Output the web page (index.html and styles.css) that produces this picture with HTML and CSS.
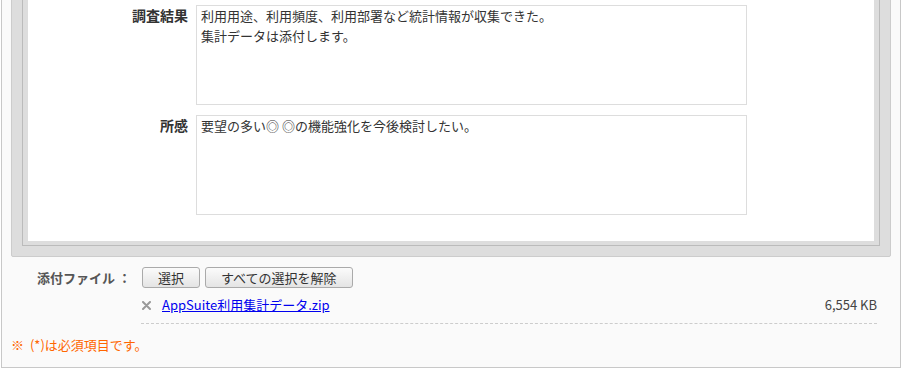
FILE: index.html
```html
<!DOCTYPE html>
<html lang="ja">
<head>
<meta charset="utf-8">
<link rel="stylesheet" href="styles.css">
</head>
<body>
<div id="page">
	<div class="frame">
		<div class="frame-inner">
			<div class="form-body">
				<div class="form-row">
					<label class="form-label">調査結果</label>
					<textarea class="form-text" readonly>利用用途、利用頻度、利用部署など統計情報が収集できた。
集計データは添付します。</textarea>
				</div>
				<div class="form-row">
					<label class="form-label">所感</label>
					<textarea class="form-text" readonly>要望の多い◎ ◎の機能強化を今後検討したい。</textarea>
				</div>
			</div>
		</div>
	</div>

	<div class="attach">
		<div class="attach-row">
			<span class="attach-label">添付ファイル ：</span>
			<div class="attach-body">
				<div class="attach-buttons">
					<button type="button" class="btn">選択</button>
					<button type="button" class="btn">すべての選択を解除</button>
				</div>
				<div class="file-item">
					<span class="file-del"><svg width="9" height="9" viewBox="0 0 9 9"><path d="M1 1L8 8M8 1L1 8" stroke="#999" stroke-width="2" stroke-linecap="round"/></svg></span>
					<a href="#" class="file-link">AppSuite利用集計データ.zip</a>
					<span class="file-size">6,554 KB</span>
				</div>
			</div>
		</div>
		<p class="note">※ (*)は必須項目です。</p>
	</div>
</div>
</body>
</html>
```

FILE: styles.css
```css
body {
	margin: 0;
	background-color: #ffffff;
	font-family: "Noto Sans CJK JP", "Noto Sans", sans-serif;
	font-size: 13px;
	color: #333333;
}
#page {
	margin: -40px 1px 0 1px;
	border: 1px solid #c8c8c8;
	background-color: #fafafa;
	padding: 9px 9px 0 9px;
	height: 408px;
	box-sizing: border-box;
}
.frame {
	border: 1px solid #cccccc;
	background-color: #dddddd;
	padding: 10px;
	border-radius: 2px;
}
.frame-inner {
	border: 1px solid #bbbbbb;
	padding: 5px 5px 4px 5px;
}
.form-body {
	background-color: #ffffff;
	padding: 18px 0 26px 0;
}
.form-row {
	display: flex;
	gap: 8px;
	margin-bottom: 10px;
}
.form-row:last-child {
	margin-bottom: 0;
}
.form-label {
	width: 160px;
	flex: none;
	text-align: right;
	font-weight: bold;
	font-size: 14px;
	line-height: 20px;
	color: #333333;
}
.form-text {
	width: 551px;
	height: 100px;
	box-sizing: border-box;
	border: 1px solid #dddddd;
	padding: 0 4px;
	margin: 0;
	font-family: "Noto Sans CJK JP", "Noto Sans", sans-serif;
	font-size: 13px;
	line-height: 20px;
	color: #333333;
	resize: none;
	overflow: hidden;
	outline: none;
}
.attach {
	padding: 10px 14px 0 0;
}
.attach-row {
	display: flex;
}
.attach-label {
	width: 130px;
	flex: none;
	text-align: right;
	padding-right: 10px;
	box-sizing: border-box;
	font-weight: bold;
	color: #555555;
	line-height: 22px;
}
.attach-body {
	flex: 1;
}
.attach-buttons {
	display: flex;
	gap: 5px;
	padding-left: 1px;
}
.btn {
	height: 21px;
	padding: 0 15px;
	border: 1px solid #aaaaaa;
	border-radius: 3px;
	background: linear-gradient(#fbfbfb, #e4e4e4);
	font-family: "Noto Sans CJK JP", "Noto Sans", sans-serif;
	font-size: 13px;
	line-height: 19px;
	color: #333333;
}
.file-item {
	display: flex;
	align-items: center;
	margin-top: 8px;
	padding-bottom: 9px;
	border-bottom: 1px dashed #cccccc;
	line-height: 18px;
}
.file-del {
	width: 20px;
	flex: none;
	padding-left: 1px;
	display: flex;
	align-items: center;
}
.file-link {
	color: #0000ee;
	text-decoration: underline;
}
.file-size {
	margin-left: auto;
	color: #444444;
}
.note {
	margin: 12px 0 0 0;
	color: #ff6600;
	line-height: 18px;
	word-spacing: 3px;
}
```
